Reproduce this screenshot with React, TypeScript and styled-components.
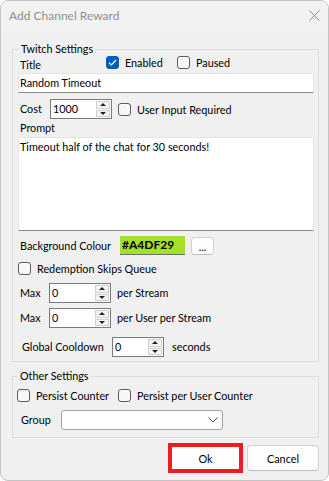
import React from "react";
import styled, { createGlobalStyle } from "styled-components";

const GlobalStyle = createGlobalStyle`
  html, body {
    margin: 0;
    padding: 0;
    background: #ffffff;
  }
  body {
    font-family: Lato, "Liberation Sans", sans-serif;
    font-size: 10.8px;
    color: #000;
  }
  * {
    box-sizing: border-box;
  }
`;

const Window = styled.div`
  width: 329px;
  height: 481px;
  border: 1px solid #c4c4c4;
  border-radius: 8px;
  background: #f0f0f0;
  overflow: hidden;
`;

const TitleBar = styled.div`
  height: 29px;
  display: flex;
  align-items: center;
  justify-content: space-between;
  padding: 0 8px 0 8px;
  background: #f2f2f2;
  color: #8f8f8f;
  font-size: 12px;
`;

const Body = styled.div`
  padding: 0 9px 0 11px;
`;

const Group = styled.fieldset<{ $top: number; $padLeft: number; $padBottom: number }>`
  margin: ${(p) => p.$top}px 0 0 0;
  padding: 0 4px ${(p) => p.$padBottom}px ${(p) => p.$padLeft}px;
  border: 1px solid #dcdcdc;
  min-width: 0;
`;

const Legend = styled.legend`
  margin-left: 1px;
  padding: 0 2px;
  font-size: 10.8px;
  line-height: 14px;
`;

const Row = styled.div<{ $top?: number; $height: number; $align?: string }>`
  display: flex;
  align-items: ${(p) => p.$align || "center"};
  margin-top: ${(p) => p.$top || 0}px;
  height: ${(p) => p.$height}px;
  white-space: nowrap;
`;

const Label = styled.span<{ $width?: number; $pad?: number; $top?: number }>`
  display: block;
  flex: none;
  width: ${(p) => (p.$width ? `${p.$width}px` : "auto")};
  padding-left: ${(p) => p.$pad ?? 2}px;
  margin-top: ${(p) => p.$top || 0}px;
  line-height: 14px;
`;

const TextBox = styled.div<{ $height: number }>`
  height: ${(p) => p.$height}px;
  background: #ffffff;
  border: 1px solid #e4e4e4;
  border-bottom-color: #8a8a8a;
  padding: 2px 2px 0 1px;
  line-height: 14px;
`;

const CheckWrap = styled.label<{ $width?: number }>`
  display: flex;
  align-items: center;
  gap: 6px;
  flex: none;
  width: ${(p) => (p.$width ? `${p.$width}px` : "auto")};
  height: 13px;
  line-height: 13px;
`;

const Box = styled.span<{ $checked?: boolean }>`
  width: 13px;
  height: 13px;
  flex: none;
  border-radius: 3px;
  border: 1px solid ${(p) => (p.$checked ? "#005fb8" : "#5c5c5c")};
  background: ${(p) => (p.$checked ? "#005fb8" : "#f7f7f7")};
  display: flex;
  align-items: center;
  justify-content: center;
`;

const Numeric = styled.div<{ $width: number }>`
  width: ${(p) => p.$width}px;
  height: 20px;
  flex: none;
  display: flex;
  background: #ffffff;
  border: 1px solid #7a7a7a;
`;

const NumValue = styled.span`
  flex: 1;
  padding-left: 2px;
  line-height: 18px;
`;

const Spinner = styled.div`
  width: 14px;
  margin: 1px 1px 1px 0;
  display: flex;
  flex-direction: column;
  gap: 1px;
`;

const SpinButton = styled.div`
  flex: 1;
  border: 1px solid #cfcfcf;
  background: #f4f4f4;
  display: flex;
  align-items: center;
  justify-content: center;
`;

const Arrow = styled.span<{ $down?: boolean }>`
  width: 0;
  height: 0;
  border-left: 3px solid transparent;
  border-right: 3px solid transparent;
  ${(p) => (p.$down ? "border-top: 3px solid #222;" : "border-bottom: 3px solid #222;")}
`;

const ColourBox = styled.div<{ $colour: string }>`
  width: 65px;
  height: 19px;
  flex: none;
  background: ${(p) => p.$colour};
  border-bottom: 1px solid #6f6f6f;
  padding-left: 2px;
  font-weight: 700;
  font-size: 12px;
  line-height: 18px;
`;

const SmallButton = styled.div`
  width: 23px;
  height: 18px;
  margin-left: 6px;
  background: #fdfdfd;
  border: 1px solid #d0d0d0;
  border-bottom-color: #bcbcbc;
  border-radius: 4px;
  text-align: center;
  line-height: 18px;
`;

const Combo = styled.div`
  width: 162px;
  height: 20px;
  background: #ffffff;
  border: 1px solid #a3a3a3;
  border-radius: 3px;
  display: flex;
  align-items: center;
  justify-content: flex-end;
  padding-right: 4px;
`;

const ButtonBar = styled.div`
  display: flex;
  justify-content: flex-end;
  align-items: center;
  gap: 4px;
  margin-top: 5px;
  height: 30px;
`;

const Highlight = styled.div`
  width: 75px;
  height: 30px;
  border: 4px solid #ec1c24;
  background: #fdfdfd;
  display: flex;
  align-items: center;
  justify-content: center;
`;

const Button = styled.div`
  width: 72px;
  height: 26px;
  background: #fdfdfd;
  border: 1px solid #d0d0d0;
  border-bottom-color: #bdbdbd;
  border-radius: 4px;
  display: flex;
  align-items: center;
  justify-content: center;
`;

const Check = ({ label, checked, width }: { label: string; checked?: boolean; width?: number }) => (
  <CheckWrap $width={width}>
    <Box $checked={checked}>
      {checked && (
        <svg width="9" height="7" viewBox="0 0 9 7">
          <path d="M1 3.6 L3.4 6 L8 1" fill="none" stroke="#fff" strokeWidth="1.2" />
        </svg>
      )}
    </Box>
    <span>{label}</span>
  </CheckWrap>
);

const NumberBox = ({ value, width }: { value: string; width: number }) => (
  <Numeric $width={width}>
    <NumValue>{value}</NumValue>
    <Spinner>
      <SpinButton>
        <Arrow />
      </SpinButton>
      <SpinButton>
        <Arrow $down />
      </SpinButton>
    </Spinner>
  </Numeric>
);

export default function App() {
  return (
    <>
      <GlobalStyle />
      <Window>
        <TitleBar>
          <span>Add Channel Reward</span>
          <svg width="11" height="11" viewBox="0 0 11 11">
            <path d="M0.5 0.5 L10.5 10.5 M10.5 0.5 L0.5 10.5" stroke="#8a8a8a" strokeWidth="1" />
          </svg>
        </TitleBar>
        <Body>
          <Group $top={12} $padLeft={5} $padBottom={4}>
            <Legend>Twitch Settings</Legend>
            <Row $height={17} $align="flex-start">
              <Label $width={88} $top={2}>Title</Label>
              <Check label="Enabled" checked width={71} />
              <Check label="Paused" />
            </Row>
            <TextBox $height={20}>Random Timeout</TextBox>
            <Row $top={6} $height={20}>
              <Label $width={32}>Cost</Label>
              <NumberBox value="1000" width={62} />
              <span style={{ width: 6 }} />
              <Check label="User Input Required" />
            </Row>
            <Row $top={2} $height={14}>
              <Label>Prompt</Label>
            </Row>
            <Row $top={2} $height={94} $align="stretch">
              <TextBox $height={94} style={{ flex: 1 }}>
                Timeout half of the chat for 30 seconds!
              </TextBox>
            </Row>
            <Row $top={5} $height={19}>
              <Label $width={102}>Background Colour</Label>
              <ColourBox $colour="#a4df29">#A4DF29</ColourBox>
              <SmallButton>...</SmallButton>
            </Row>
            <Row $top={7} $height={13}>
              <Check label="Redemption Skips Queue" />
            </Row>
            <Row $top={8} $height={20}>
              <Label $width={31}>Max</Label>
              <NumberBox value="0" width={62} />
              <Label $pad={6}>per Stream</Label>
            </Row>
            <Row $top={5} $height={20}>
              <Label $width={31}>Max</Label>
              <NumberBox value="0" width={62} />
              <Label $pad={6}>per User per Stream</Label>
            </Row>
            <Row $top={9} $height={20}>
              <Label $width={94} $pad={4}>Global Cooldown</Label>
              <NumberBox value="0" width={52} />
              <Label $pad={8}>seconds</Label>
            </Row>
          </Group>
          <Group $top={7} $padLeft={4} $padBottom={7}>
            <Legend>Other Settings</Legend>
            <Row $top={6} $height={13}>
              <Check label="Persist Counter" width={101} />
              <Check label="Persist per User Counter" />
            </Row>
            <Row $top={8} $height={20}>
              <Label $width={44} $pad={4}>Group</Label>
              <Combo>
                <svg width="10" height="6" viewBox="0 0 10 6">
                  <path d="M0.5 0.5 L5 5 L9.5 0.5" fill="none" stroke="#555" strokeWidth="1" />
                </svg>
              </Combo>
            </Row>
          </Group>
          <ButtonBar>
            <Highlight>Ok</Highlight>
            <Button>Cancel</Button>
          </ButtonBar>
        </Body>
      </Window>
    </>
  );
}
